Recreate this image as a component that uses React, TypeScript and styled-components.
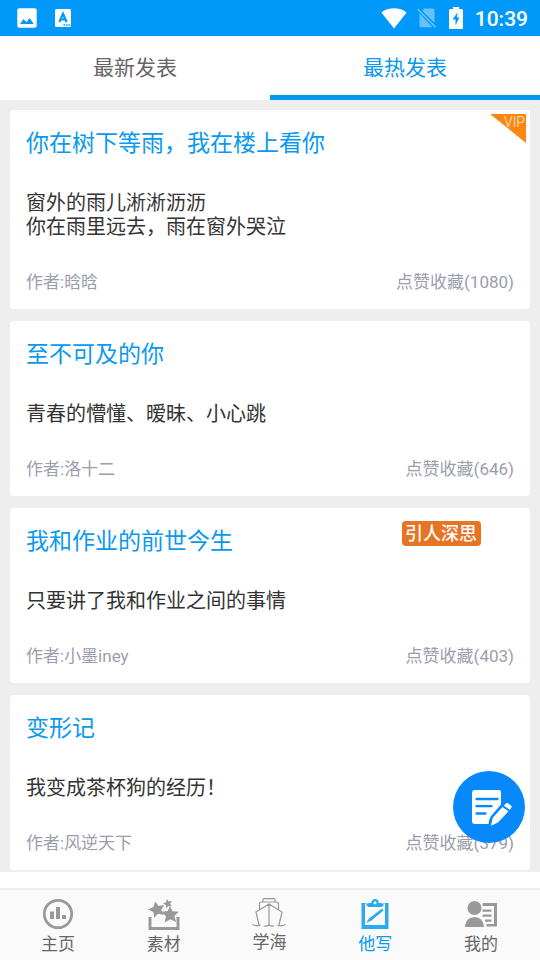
import React, { useState } from "react";
import styled, { createGlobalStyle } from "styled-components";

const GlobalStyle = createGlobalStyle`
  *, *::before, *::after { box-sizing: border-box; }
  body {
    margin: 0;
    background: #ffffff;
    font-family: Roboto, "Noto Sans CJK SC", sans-serif;
  }
  button { font-family: inherit; border: 0; background: none; padding: 0; cursor: pointer; }
`;

const Page = styled.div`
  display: flex;
  flex-direction: column;
  min-height: 100vh;
`;

const StatusBar = styled.header`
  display: flex;
  align-items: center;
  justify-content: space-between;
  height: 36px;
  padding: 0 12px 0 17px;
  background: #0099fa;
  color: #ffffff;
  svg { display: block; }
`;

const StatusGroup = styled.div<{ $gap: number }>`
  display: flex;
  align-items: center;
  gap: ${(p) => p.$gap}px;
`;

const Clock = styled.time`
  font-size: 21px;
  font-weight: 500;
  line-height: 36px;
  padding-top: 2px;
`;

const Tabs = styled.div`
  display: flex;
  background: #ffffff;
`;

const Tab = styled.button<{ $active: boolean }>`
  flex: 1;
  height: 64px;
  padding-top: 4px;
  border-bottom: 5px solid ${(p) => (p.$active ? "#0099ee" : "transparent")};
  color: ${(p) => (p.$active ? "#0a99ee" : "#666666")};
  font-size: 21px;
  line-height: 30px;
`;

const Feed = styled.main`
  display: flex;
  flex-direction: column;
  gap: 12px;
  padding: 10px 10px 2px;
  background: #eeeeee;
`;

const Card = styled.article`
  position: relative;
  padding: 17px 16px 15px;
  border-radius: 4px;
  background: #ffffff;
`;

const Title = styled.h2`
  margin: 0;
  color: #0a99ee;
  font-size: 23px;
  font-weight: 400;
  line-height: 34px;
`;

const Tag = styled.span`
  position: absolute;
  top: 13px;
  right: 49px;
  padding: 0 4px 0 3px;
  border-radius: 4px;
  background: #e67424;
  color: #ffffff;
  font-size: 18px;
  font-weight: 500;
  line-height: 25px;
`;

const Summary = styled.p`
  margin: 30px 0 31px;
  color: #333333;
  font-size: 20px;
  line-height: 24px;
  white-space: pre-line;
`;

const Meta = styled.footer`
  display: flex;
  justify-content: space-between;
  color: #9a9dac;
  font-size: 17px;
  line-height: 24px;
`;

const VipRibbon = styled.div`
  position: absolute;
  top: 4px;
  right: 4px;
  width: 36px;
  height: 29px;
  padding-right: 1px;
  background: #fb8710;
  clip-path: polygon(0 0, 100% 0, 100% 100%);
  color: #fff0dc;
  font-size: 14px;
  font-weight: 300;
  line-height: 17px;
  text-align: right;
`;

const ComposeButton = styled.button`
  position: fixed;
  right: 15px;
  bottom: 117px;
  display: flex;
  align-items: center;
  justify-content: center;
  width: 72px;
  height: 72px;
  padding: 2px 0 0 5px;
  border-radius: 50%;
  background: #0788fb;
`;

const BottomNav = styled.nav`
  display: flex;
  margin-top: auto;
  padding: 8px 6px 0 5px;
  height: 72px;
  border-top: 2px solid #eeeeee;
  background: #fafafa;
`;

const NavItem = styled.button<{ $active: boolean; $compact?: boolean }>`
  display: flex;
  flex: 1;
  flex-direction: column;
  align-items: center;
  gap: ${(p) => (p.$compact ? 0 : 2)}px;
  color: ${(p) => (p.$active ? "#0a99ee" : "#666666")};
  font-size: 17px;
  line-height: 24px;
  svg { display: block; }
`;

const ImageIcon = () => (
  <svg width="20" height="20" viewBox="0 0 20 20" aria-hidden="true">
    <rect x="0.3" y="0.3" width="19.4" height="19.4" rx="2" fill="#fff" />
    <path d="M3 16l3.5-5 3 3.3L12.6 10l4.2 6z" fill="#0099fa" />
  </svg>
);

const LetterIcon = () => (
  <svg width="16" height="18" viewBox="0 0 16 18" aria-hidden="true">
    <rect width="16" height="18" rx="1.5" fill="#fff" />
    <path d="M4.4 13L8 4.8l3.6 8.2M5.6 10.4h4.8" fill="none" stroke="#0099fa" strokeWidth="2.2" />
    <path d="M8.5 15.2h1.5v1.5H8.5zM11 15.2h1.5v1.5H11zM13.4 15.2h1.5v1.5h-1.5z" fill="#0099fa" />
  </svg>
);

const WifiIcon = () => (
  <svg width="26" height="21" viewBox="0 0 26 21" aria-hidden="true">
    <path d="M0.4 4.4C7.5-1 18.5-1 25.6 4.4L13 20.5z" fill="#fff" />
  </svg>
);

const NoSimIcon = () => (
  <svg width="20" height="20" viewBox="0 0 20 20" aria-hidden="true">
    <path d="M7.5 0.5H16q1.5 0 1.500 1.500v13L5.200 2.800zM2.500 5.600l13 13.700H4Q2.500 19.300 2.500 18z" fill="#66c2fc" />
    <path d="M0.700 1.200l18 18.200" stroke="#66c2fc" strokeWidth="1.600" />
  </svg>
);

const BatteryIcon = () => (
  <svg width="14" height="22" viewBox="0 0 14 22" aria-hidden="true">
    <path d="M4 0h6v2h2.500Q14 2 14 3.500v17q0 1.500-1.500 1.500h-11Q0 22 0 20.500v-17Q0 2 1.500 2H4z" fill="#fff" />
    <path d="M8.500 5.500L3.500 12.500h3v5.700l4-7.600H8z" fill="#0099fa" />
  </svg>
);

const ComposeIcon = () => (
  <svg width="40" height="38" viewBox="0 0 40 38" aria-hidden="true">
    <path
      d="M3 1h24q2 0 2 2v12.500L19 27q-2 3-2.500 8H3q-3 0-3-3V4q0-3 3-3z"
      fill="#fff"
    />
    <path d="M4.500 10h21M4.500 17.200h15M4.500 24.500h9" stroke="#0788fb" strokeWidth="2.300" strokeLinecap="round" />
    <path d="M30.500 18l6 4.300L26 33.500l-7 3.300 1.800-8z" fill="#fff" />
    <path d="M33.500 15q1-1.700 2.800-.5l2.500 1.800q1.500 1.200.3 2.700l-1.400 1.800-5.800-4z" fill="#fff" />
  </svg>
);

const HomeIcon = () => (
  <svg width="32" height="32" viewBox="0 0 32 32" aria-hidden="true">
    <circle cx="16" cy="16" r="13.700" fill="none" stroke="#999" strokeWidth="2.700" />
    <path d="M8 13.500h4v7.500H8zM14 9h4v12h-4zM20 17h4v4h-4z" fill="#999" />
  </svg>
);

const StarsIcon = () => (
  <svg width="32" height="32" viewBox="0 0 32 32" aria-hidden="true">
    <path d="M2 19v11.500h28V19" fill="none" stroke="#999" strokeWidth="3" />
    <path d="M7.300 3.500l3.200 4.500 5.700-1-3 5 2.700 5-5.800-1.200-3.900 4-.8-5.700L0 11.400l5.400-2.400z" fill="#999" />
    <path d="M19 1l1.600 2.600 3.400-.7-1.900 2.900 1.600 2.800-3.200-.6-2.300 2.200-.4-3.200L15 5.500l3-1.300z" fill="#999" />
    <path d="M22.200 8l2.200 5.300 6.400.5-4.500 4.200 2 6.300-5.800-3-5.900 3.200 1.300-6.300-4.200-4.500 6-.7z" fill="#999" />
  </svg>
);

const ShipIcon = () => (
  <svg width="34" height="32" viewBox="0 0 34 32" fill="none" stroke="#999" strokeWidth="1.200" aria-hidden="true">
    <path d="M17 6v21.500M7 27L4 14 17 6l13 8-3 13M7.500 12V6q0-2 2-2h15q2 0 2 2v6M11 4V1.500Q11 .6 12 .6h10q1 0 1 .9V4" />
    <path d="M.5 26.500c3 1.500 5.500 1.800 8 .5M33.500 26.500c-3 1.500-5.500 1.800-8 .5M12 28q3 .5 5-1 2 1.500 5 1" />
  </svg>
);

const WriteIcon = () => (
  <svg width="32" height="32" viewBox="0 0 32 32" aria-hidden="true">
    <path d="M7.500 5v3H24.500V5H29.500V31H2.500V5zM6 5.500V27H26V5.500z" fill="#2aabee" fillRule="evenodd" />
    <path d="M9 9V6q0-1 1-1h2.500h7H22q1 0 1 1v3z" fill="#2aabee" />
    <circle cx="16" cy="4.800" r="2.600" fill="#fafafa" stroke="#2aabee" strokeWidth="2.200" />
    <path d="M23 10.500l1.500 2L12.500 22.500 7 25l3-4.500z" fill="#2aabee" />
  </svg>
);

const ProfileIcon = () => (
  <svg width="34" height="32" viewBox="0 0 34 32" aria-hidden="true">
    <circle cx="10.500" cy="10" r="7" fill="#999" />
    <path d="M1 29q1-10 9.500-10T20 29zM18.500 5H33v23.500H22.500V26h7.500V8H18.500zM18.500 11.500h9V13.700h-9zM18.500 16.500h9v2.200h-9zM21 21.500h6.500v2.200H21z" fill="#999" />
  </svg>
);

interface Post {
  title: string;
  summary: string;
  author: string;
  likes: number;
  vip?: boolean;
  tag?: string;
}

const posts: Post[] = [
  {
    title: "你在树下等雨，我在楼上看你",
    summary: "窗外的雨儿淅淅沥沥\n你在雨里远去，雨在窗外哭泣",
    author: "晗晗",
    likes: 1080,
    vip: true,
  },
  { title: "至不可及的你", summary: "青春的懵懂、暧昧、小心跳", author: "洛十二", likes: 646 },
  {
    title: "我和作业的前世今生",
    summary: "只要讲了我和作业之间的事情",
    author: "小墨iney",
    likes: 403,
    tag: "引人深思",
  },
  { title: "变形记", summary: "我变成茶杯狗的经历！", author: "风逆天下", likes: 379 },
];

const navItems = [
  { label: "主页", Icon: HomeIcon },
  { label: "素材", Icon: StarsIcon },
  { label: "学海", Icon: ShipIcon, compact: true },
  { label: "他写", Icon: WriteIcon },
  { label: "我的", Icon: ProfileIcon },
];

export default function App() {
  const [tab, setTab] = useState("最热发表");

  return (
    <>
      <GlobalStyle />
      <Page lang="zh-CN">
        <StatusBar>
          <StatusGroup $gap={18}>
            <ImageIcon />
            <LetterIcon />
          </StatusGroup>
          <StatusGroup $gap={12}>
            <StatusGroup $gap={10}>
              <WifiIcon />
              <NoSimIcon />
            </StatusGroup>
            <BatteryIcon />
            <Clock>10:39</Clock>
          </StatusGroup>
        </StatusBar>
        <Tabs role="tablist">
          {["最新发表", "最热发表"].map((name) => (
            <Tab
              key={name}
              role="tab"
              aria-selected={tab === name}
              $active={tab === name}
              onClick={() => setTab(name)}
            >
              {name}
            </Tab>
          ))}
        </Tabs>
        <Feed>
          {posts.map((post) => (
            <Card key={post.title}>
              <Title>{post.title}</Title>
              {post.tag && <Tag>{post.tag}</Tag>}
              {post.vip && <VipRibbon>VIP</VipRibbon>}
              <Summary>{post.summary}</Summary>
              <Meta>
                <span>作者:{post.author}</span>
                <span>点赞收藏({post.likes})</span>
              </Meta>
            </Card>
          ))}
        </Feed>
        <ComposeButton aria-label="写作">
          <ComposeIcon />
        </ComposeButton>
        <BottomNav>
          {navItems.map(({ label, Icon, compact }) => (
            <NavItem key={label} $active={label === "他写"} $compact={compact}>
              <Icon />
              {label}
            </NavItem>
          ))}
        </BottomNav>
      </Page>
    </>
  );
}
